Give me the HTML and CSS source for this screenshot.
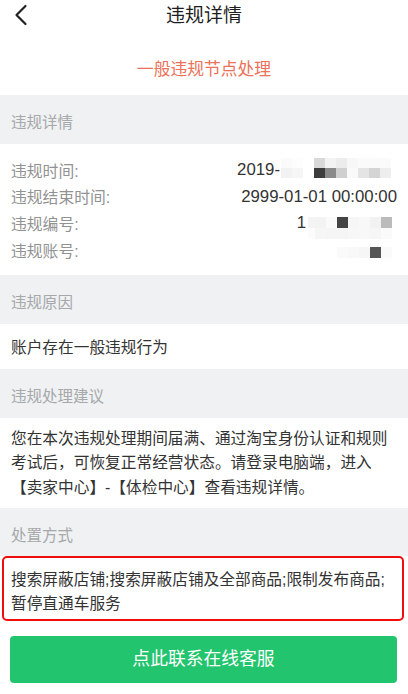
FILE: index.html
```html
<!DOCTYPE html>
<html lang="zh-CN">
<head>
<meta charset="utf-8">
<title>违规详情</title>
<link rel="stylesheet" href="styles.css">
</head>
<body>
<div class="page">
  <header class="topbar">
    <svg class="back" width="14" height="22" viewBox="0 0 14 22"><polyline points="11.5,2 2.5,11 11.5,20" fill="none" stroke="#222" stroke-width="2.2" stroke-linecap="round" stroke-linejoin="round"/></svg>
    <h1 class="title">违规详情</h1>
  </header>

  <div class="subtitle">一般违规节点处理</div>

  <div class="sec-head">违规详情</div>
  <div class="details">
    <div class="row">
      <span class="label">违规时间:</span>
      <span class="value">2019-<span class="mosaic m1">
        <i class="c-fb"></i><i class="c-fd"></i><i class="c-ff"></i><i class="c-d9"></i><i class="c-f3"></i><i class="c-ec"></i><i class="c-f7"></i><i class="c-fa"></i><i class="c-fa"></i><i class="c-fb"></i>
        <i class="c-f2"></i><i class="c-f6"></i><i class="c-ff"></i><i class="c-3d"></i><i class="c-8a"></i><i class="c-cf"></i><i class="c-f9"></i><i class="c-e4"></i><i class="c-d4"></i><i class="c-ee"></i>
      </span></span>
    </div>
    <div class="row">
      <span class="label">违规结束时间:</span>
      <span class="value">2999-01-01 00:00:00</span>
    </div>
    <div class="row">
      <span class="label">违规编号:</span>
      <span class="value">1<span class="mosaic m3">
        <i class="c-f4"></i><i class="c-f3"></i><i class="c-fa"></i><i class="c-44"></i><i class="c-f6"></i><i class="c-f8"></i><i class="c-f2"></i><i class="c-bb"></i>
        <i class="c-fc"></i><i class="c-f6"></i><i class="c-f5"></i><i class="c-f5"></i><i class="c-f7"></i><i class="c-f8"></i><i class="c-f6"></i><i class="c-fa"></i>
      </span></span>
    </div>
    <div class="row">
      <span class="label">违规账号:</span>
      <span class="value"><span class="mosaic m4"><i class="c-fa"></i><i class="c-f8"></i><i class="c-f6"></i><i class="c-55"></i><i class="c-fa"></i></span></span>
    </div>
  </div>

  <div class="sec-head">违规原因</div>
  <div class="text-block single">账户存在一般违规行为</div>

  <div class="sec-head">违规处理建议</div>
  <div class="text-block para">您在本次违规处理期间届满、通过淘宝身份认证和规则考试后，可恢复正常经营状态。请登录电脑端，进入【卖家中心】-【体检中心】查看违规详情。</div>

  <div class="sec-head short">处置方式</div>
  <div class="text-block marked">搜索屏蔽店铺;搜索屏蔽店铺及全部商品;限制发布商品;暂停直通车服务</div>

  <div class="actions">
    <button class="contact">点此联系在线客服</button>
  </div>
</div>
</body>
</html>
```

FILE: styles.css
```css
* { box-sizing: border-box; margin: 0; padding: 0; }
html, body { background: #fff; }
body {
  width: 408px;
  height: 694px;
  overflow: hidden;
  font-family: "Liberation Sans", "Noto Sans CJK SC", sans-serif;
  color: #333;
}
.page { display: flex; flex-direction: column; }

.topbar {
  height: 31px;
  display: flex;
  align-items: center;
  justify-content: center;
  position: relative;
}
.back { position: absolute; left: 14px; top: 4px; }
.title {
  font-size: 19px;
  font-weight: normal;
  color: #1e1e1e;
  line-height: 31px;
}

.subtitle {
  padding: 27px 0 13px;
  line-height: 24px;
  font-size: 16.8px;
  color: #ea7259;
  text-align: center;
}

.sec-head {
  background: #eff1f3;
  padding: 17px 11px 10px;
  line-height: 22px;
  height: 49px;
  font-size: 15.5px;
  color: #a6a8aa;
}
.sec-head.short { height: 48px; }

.details { padding: 12.7px 11px 11.7px; }
.row {
  height: 26.7px;
  display: flex;
  align-items: center;
  justify-content: space-between;
}
.label { font-size: 15.8px; color: #929292; }
.value {
  font-size: 16.8px;
  color: #333;
  display: flex;
  align-items: center;
}

.mosaic { display: grid; }
.mosaic i { display: block; }
.m1 {
  grid-template-columns: repeat(10, 11px);
  grid-auto-rows: 10px;
  margin-left: 1px;
  margin-right: 6px;
  transform: translateY(-2px);
}
.m3 {
  grid-template-columns: 7px repeat(7, 11px);
  grid-auto-rows: 11px;
  margin-left: 2px;
  margin-right: 5px;
  transform: translateY(5px);
}
.m4 {
  grid-template-columns: repeat(5, 11px);
  grid-auto-rows: 11px;
  margin-right: 5px;
  transform: translateY(2px);
}
.c-ff { background: #fff; }
.c-fd { background: #fdfdfd; }
.c-fc { background: #fcfcfc; }
.c-fb { background: #fbfbfb; }
.c-fa { background: #fafafa; }
.c-f9 { background: #f9f9f9; }
.c-f8 { background: #f8f8f8; }
.c-f7 { background: #f7f7f7; }
.c-f6 { background: #f6f6f6; }
.c-f5 { background: #f5f5f5; }
.c-f4 { background: #f4f4f4; }
.c-f3 { background: #f3f3f3; }
.c-f2 { background: #f2f2f2; }
.c-ee { background: #eeeeee; }
.c-ec { background: #ececec; }
.c-e4 { background: #e4e4e4; }
.c-d9 { background: #d9d9d9; }
.c-d4 { background: #d4d4d4; }
.c-cf { background: #cfcfcf; }
.c-bb { background: #bbbbbb; }
.c-8a { background: #8a8a8a; }
.c-55 { background: #555555; }
.c-44 { background: #444444; }
.c-3d { background: #3d3d3d; }

.text-block {
  font-size: 15.7px;
  color: #333;
  padding-left: 11px;
  padding-right: 10px;
}
.single { padding-top: 13px; padding-bottom: 10px; line-height: 22px; }
.para { padding-top: 8.75px; padding-bottom: 7.75px; line-height: 24.5px; }
.marked {
  margin: 0 4px 0 2px;
  border: 2px solid #f20d0d;
  border-radius: 5px;
  padding: 10px 4px 3px 7px;
  line-height: 24px;
}

.actions { padding: 15px 11px 10px 10px; }
.contact {
  display: block;
  width: 100%;
  height: 47px;
  border: none;
  border-radius: 4px;
  background: #22c46d;
  color: #fff;
  font-family: "Liberation Sans", "Noto Sans CJK SC", sans-serif;
  font-size: 17.8px;
  line-height: 47px;
}
```
